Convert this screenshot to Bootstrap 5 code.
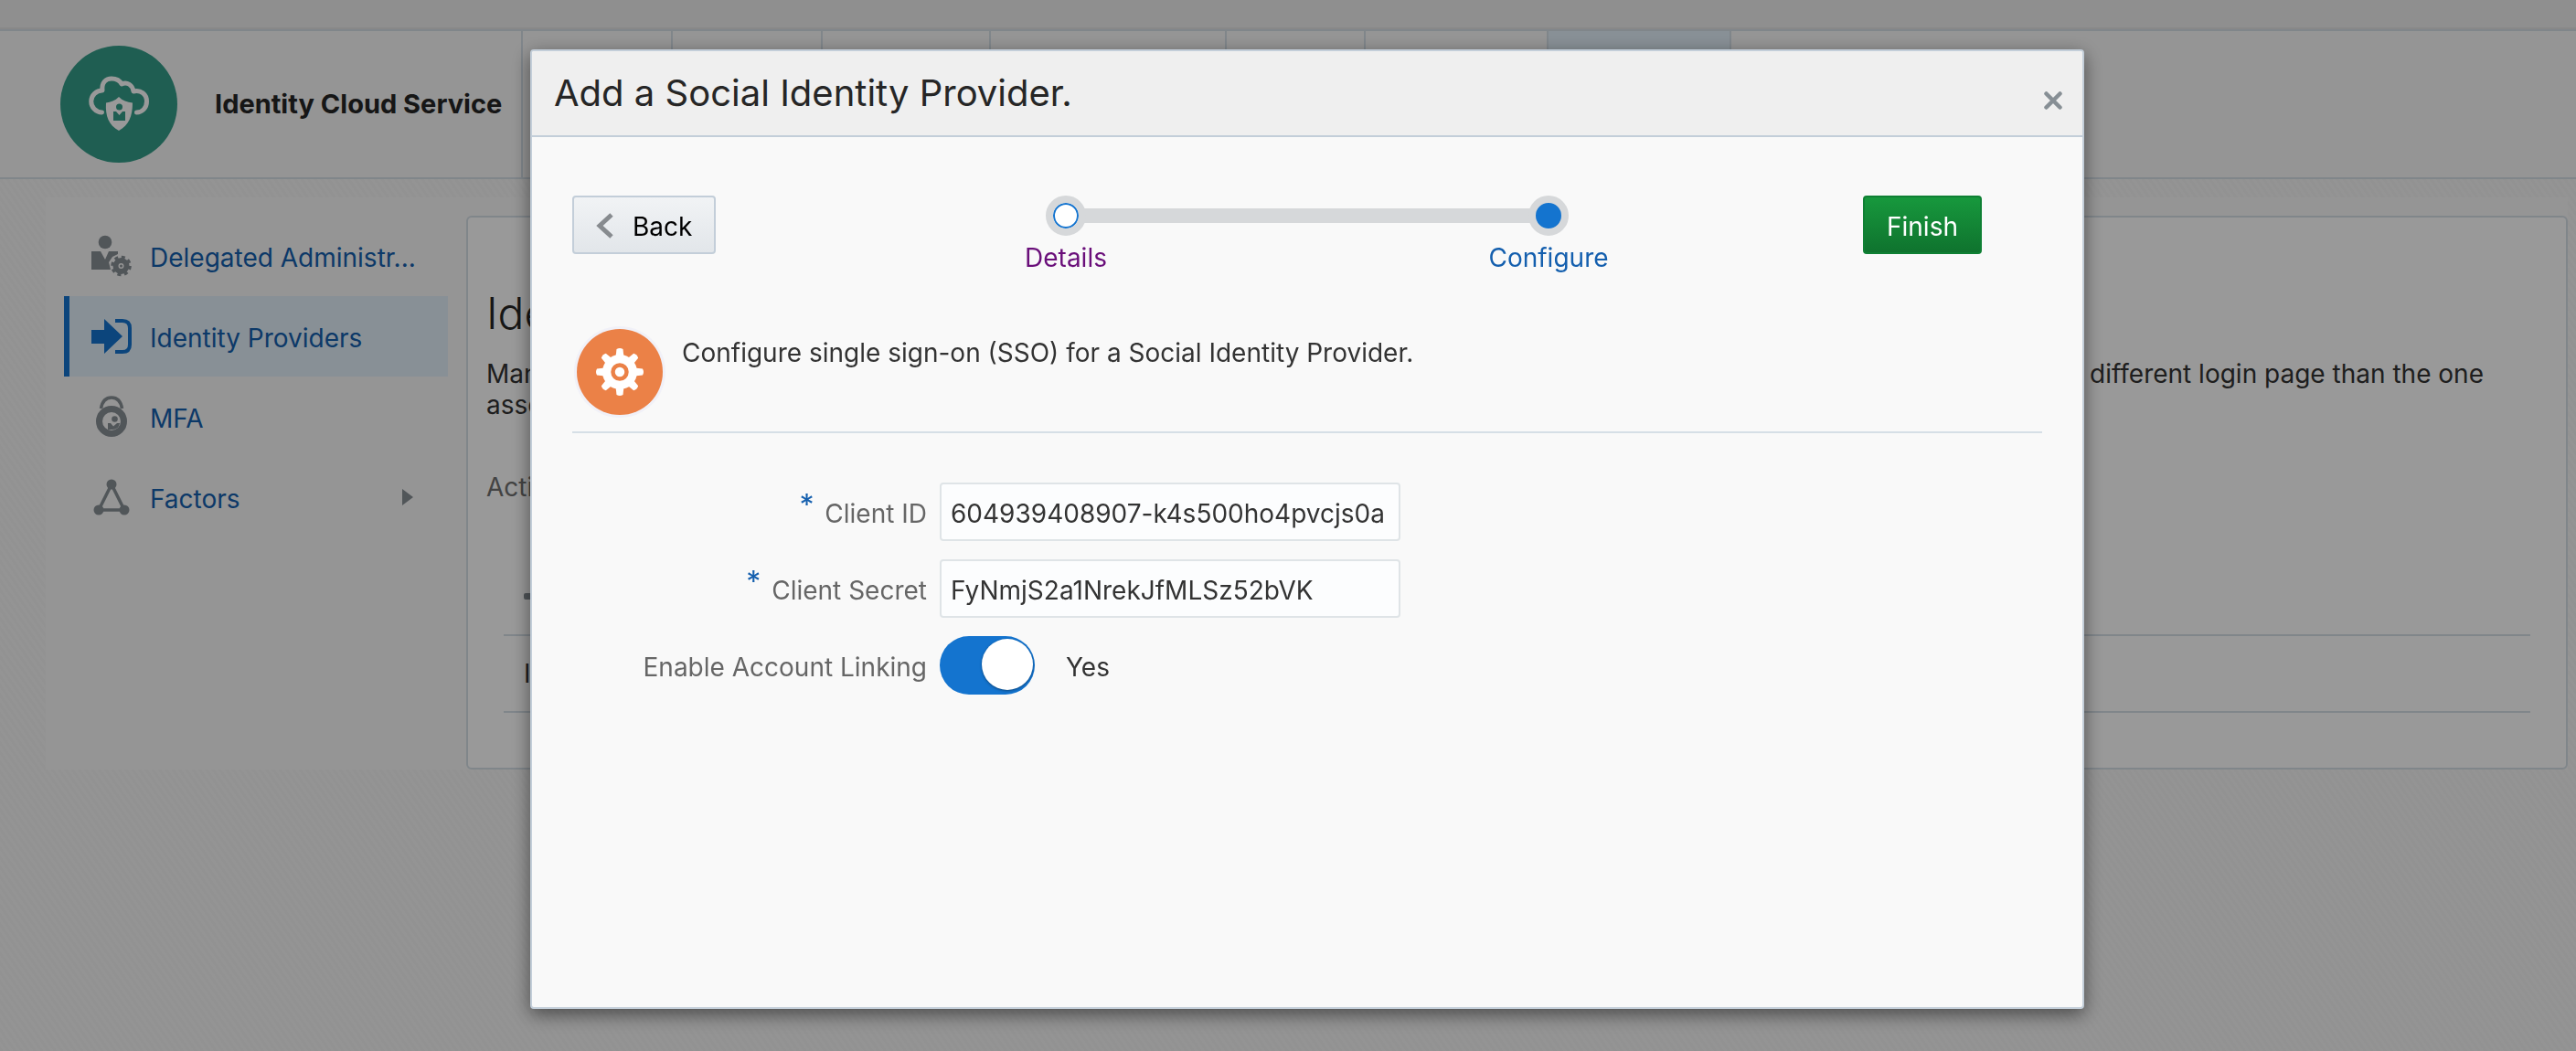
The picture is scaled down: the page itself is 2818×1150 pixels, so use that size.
<!DOCTYPE html>
<html lang="en">
<head>
<meta charset="utf-8">
<meta name="viewport" content="width=device-width, initial-scale=1">
<title>Identity Cloud Service</title>
<link href="https://cdn.jsdelivr.net/npm/bootstrap@5.3.0/dist/css/bootstrap.min.css" rel="stylesheet">
<style>
  :root {
    --line: #d5dfe7;
    --frame: #c3ced9;
    --accent: #1474cf;
    --link: #145fae;
    --icon: #878f95;
  }
  body {
    font-family: Inter, "Liberation Sans", sans-serif;
    font-size: 28px;
    line-height: 34px;
    color: #333;
    min-height: 100vh;
    background: repeating-linear-gradient(55deg, #f4f4f4 0 3px, #f7f7f7 3px 6px);
  }
  .topbar { height: 32px; background: #eee; border-bottom: 2px solid #e3e3e3; }
  .masthead {
    height: 164px;
    border-top: 2px solid var(--line);
    border-bottom: 2px solid var(--line);
    background: #f8f8f8;
  }
  .brand { padding: 0 22px 0 66px; gap: 41px; font-size: 29px; font-weight: 700; color: #262626; width: 570px; }
  .tabs > li { border-left: 2px solid var(--line); width: 164px; }
  .tabs > .tab-md { width: 184px; }
  .tabs > .tab-lg { width: 258px; }
  .tabs > .tab-sm { width: 152px; }
  .tabs > .tab-xl { width: 200px; }
  .tabs > .current { background: #e3f0fa; }
  .workspace { margin: 20px 9px 0 50px; padding: 20px 0 0 20px; gap: 20px; background: #f8f8f8; }
  .sidenav { width: 420px; }
  .sidenav a {
    height: 88px;
    padding: 0 36px 0 24px;
    border-left: 6px solid transparent;
    color: var(--link);
    text-decoration: none;
    gap: 20px;
  }
  .sidenav a > span { padding-top: 4px; }
  .sidenav a.active { background: #e3f0fa; border-color: var(--accent); }
  .sidenav svg { flex: none; color: var(--icon); }
  .sidenav a.active svg { color: var(--accent); }
  .panel { border: 2px solid var(--line); border-radius: 6px; background: #fff; padding: 77px 20px 60px; min-width: 0; }
  .panel h1 { font-size: 48px; line-height: 56px; font-weight: 300; color: #262626; margin-bottom: 21px; }
  .panel p { margin-bottom: 56px; padding-right: 70px; }
  .panel .state { color: #707070; margin-bottom: 60px; }
  .grid-rows { margin: 0 19px; }
  .grid-rows > div { height: 86px; padding-left: 22px; border-bottom: 2px solid var(--line); }
  .grid-rows > div + div { height: 84px; }

  .modal-backdrop { --bs-backdrop-opacity: .4; }
  .modal { padding-left: 42px; }
  .modal-dialog { max-width: 1700px; margin: 54px auto 0; }
  .modal-content {
    min-height: calc(100vh - 100px);
    border: 2px solid var(--frame);
    border-radius: 4px;
    background: #f9f9f9;
    box-shadow: 0 6px 20px rgba(0, 0, 0, .5);
    color: #333;
  }
  .modal-header { height: 94px; padding: 0 22px 0 24px; background: #efefef; border-bottom: 2px solid var(--frame); border-radius: 2px 2px 0 0; }
  .modal-title { font-size: 40px; line-height: 48px; font-weight: 400; color: #262626; }
  .close-btn { border: 0; background: none; padding: 0; color: var(--icon); line-height: 0; margin-top: 16px; }
  .modal-body { padding: 64px 44px; }

  .wizard-bar { display: grid; grid-template-columns: 1fr auto 1fr; align-items: start; }
  .wizard-btn { height: 64px; border-radius: 4px; padding: 4px 24px 0; font-size: 28px; line-height: 34px; justify-self: start; }
  .back-btn { color: #000; border: 2px solid var(--frame); background: linear-gradient(#f1f3f5, #e2e6ea); gap: 20px; }
  .back-btn svg { margin-bottom: 2px; }
  .finish-btn { color: #fff; border: 2px solid #0f8034; background: linear-gradient(#17983d, #0f732e); justify-self: end; margin-right: 66px; }
  .stepper { position: relative; width: 704px; }
  .stepper::before { content: ""; position: absolute; top: 14px; left: 88px; right: 88px; height: 16px; background: #d6d8da; }
  .stepper li { width: 176px; position: relative; }
  .stepper a { text-decoration: none; color: var(--link); line-height: 36px; gap: 6px; }
  .stepper .visited { color: #6a0f7a; }
  .dot { width: 44px; height: 44px; border: 8px solid #d6d8da; border-radius: 50%; background: var(--accent); }
  .visited .dot { background: #fff; box-shadow: inset 0 0 0 2px var(--accent); }

  .intro { margin: 55px 0 54px; padding-bottom: 13px; gap: 16px; border-bottom: 2px solid #d6dfe6; }
  .intro p { line-height: 36px; padding-top: 13px; }
  .field { height: 64px; margin-bottom: 20px; }
  .field label { padding: 4px 14px 0 0; color: #666; text-align: right; }
  .req { color: var(--link); margin-right: 4px; font-size: 32px; line-height: 0; vertical-align: 8px; }
  .field .form-control {
    width: 504px; height: 64px; padding: 4px 8px 0 10px; border: 2px solid #dfe4e7; border-radius: 4px;
    background: #fcfdfe; font-size: 28px; line-height: 34px; color: #333;
  }
  .field .toggle {
    appearance: none; width: 104px; height: 64px; border-radius: 32px; margin: 0; background: var(--accent);
    display: flex; justify-content: flex-end; align-items: center; padding: 0 2px;
  }
  .field .toggle::before { content: ""; width: 56px; height: 56px; margin-bottom: 2px; border-radius: 50%; background: #fff; box-shadow: 0 1px 3px rgba(0, 0, 0, .4); }
  .field output { padding: 4px 0 0 34px; }
</style>
<script src="https://cdn.jsdelivr.net/npm/bootstrap@5.3.0/dist/js/bootstrap.bundle.min.js"></script>
</head>
<body>
<div class="topbar"></div>
<header class="masthead d-flex">
  <div class="brand d-flex align-items-center flex-shrink-0">
    <svg class="flex-shrink-0" width="128" height="128" viewBox="0 0 128 128" aria-hidden="true">
      <circle cx="64" cy="64" r="64" fill="#359d89"/>
      <path d="M45.500 73A12 12 0 0 1 46 49C45 40 50 36 56 36c5 0 9 2 11 6 6-3 12 1 13 8 8-2 14.500 3 14.500 11 0 7-5 12-11 12" fill="none" stroke="#fff" stroke-width="5" stroke-linecap="round" stroke-linejoin="round"/>
      <path d="M64 56c4 4 9 6 15 6.500C79 77 75 87 64 93 53 87 49 77 50 62.500 55 62 60 60 64 56z" fill="#fff"/>
      <circle cx="64.500" cy="67" r="3.500" fill="#359d89"/>
      <path d="M58 72h3l3.500 4 3.500-4h3v10H58z" fill="#359d89"/>
    </svg>
    <span class="text-nowrap">Identity Cloud Service</span>
  </div>
  <ul class="tabs list-unstyled d-flex mb-0">
    <li></li><li></li><li class="tab-md"></li><li class="tab-lg"></li><li class="tab-sm"></li><li class="tab-xl"></li><li class="tab-xl current"></li><li></li>
  </ul>
</header>

<main class="workspace d-flex">
  <nav class="sidenav flex-shrink-0">
    <a href="#" class="d-flex align-items-center">
      <svg width="44" height="46" viewBox="0 0 44 46" fill="currentColor" aria-hidden="true">
        <circle cx="15" cy="8" r="7.300"/>
        <path d="M0 18h10l5 9 4-9h10v3l-6 3-4 6 2 8H0z"/>
        <circle cx="32.500" cy="34" r="6" fill="none" stroke="currentColor" stroke-width="6"/>
        <circle cx="32.500" cy="34" r="9.800" fill="none" stroke="currentColor" stroke-width="3" stroke-dasharray="4 3.700"/>
        <circle cx="32.500" cy="34" r="1.500"/>
      </svg>
      <span class="text-nowrap">Delegated Administr...</span>
    </a>
    <a href="#" class="active d-flex align-items-center" aria-current="page">
      <svg width="44" height="38" viewBox="0 0 44 38" fill="currentColor" aria-hidden="true">
        <path d="M0 12h14V0l20 19-20 19V27H0z"/>
        <path d="M26 2h8q8 0 8 8v18q0 8-8 8h-8" fill="none" stroke="currentColor" stroke-width="4"/>
      </svg>
      <span>Identity Providers</span>
    </a>
    <a href="#" class="d-flex align-items-center">
      <svg width="44" height="46" viewBox="0 0 44 46" fill="currentColor" aria-hidden="true">
        <path d="M10.500 14C12 5 16 2 22 2s10 3 11.500 12" fill="none" stroke="currentColor" stroke-width="3.500"/>
        <circle cx="22" cy="28" r="13.500" fill="none" stroke="currentColor" stroke-width="7"/>
        <circle cx="25.500" cy="25.500" r="3.300"/>
        <path d="M18 30h3l3 3.500 4-3.500h3q-1 7-8 7h-5z"/>
      </svg>
      <span>MFA</span>
    </a>
    <a href="#" class="d-flex align-items-center">
      <svg width="44" height="42" viewBox="0 0 44 42" fill="currentColor" aria-hidden="true">
        <path d="M22 7 8 35h28z" fill="none" stroke="currentColor" stroke-width="3.500"/>
        <circle cx="22" cy="7" r="5.500"/><circle cx="8" cy="35" r="5.500"/><circle cx="36" cy="35" r="5.500"/>
      </svg>
      <span class="flex-grow-1">Factors</span>
      <svg width="14" height="18" viewBox="0 0 14 18" fill="currentColor" aria-hidden="true"><path d="M0 0l12 9-12 9z"/></svg>
    </a>
  </nav>
  <section class="panel flex-grow-1">
    <h1>Identity Providers</h1>
    <p class="d-flex justify-content-between"><span>Manage<br>associated</span><span>different login page than the one</span></p>
    <div class="state">Activated</div>
    <div class="grid-rows">
      <div class="d-flex align-items-center">
        <svg width="20" height="7" viewBox="0 0 20 7" aria-hidden="true"><rect width="20" height="7" rx="2" fill="#878f95"/></svg>
      </div>
      <div class="d-flex align-items-center">Identity</div>
    </div>
  </section>
</main>

<div class="modal-backdrop show"></div>
<div class="modal show d-block" role="dialog" aria-labelledby="dialogTitle">
  <div class="modal-dialog">
    <div class="modal-content">
      <div class="modal-header d-flex justify-content-between">
        <h2 class="modal-title" id="dialogTitle">Add a Social Identity Provider.</h2>
        <button type="button" class="close-btn" aria-label="Close">
          <svg width="20" height="20" viewBox="0 0 20 20" aria-hidden="true"><path d="M2.500 2.500l15 15m0-15l-15 15" stroke="currentColor" stroke-width="4.500" stroke-linecap="round"/></svg>
        </button>
      </div>
      <div class="modal-body">
        <div class="wizard-bar">
          <button type="button" class="btn wizard-btn back-btn d-flex align-items-center">
            <svg width="20" height="28" viewBox="0 0 20 28" fill="none" aria-hidden="true"><path d="M17 2 4 14l13 12" stroke="#878b8f" stroke-width="5"/></svg>
            <span>Back</span>
          </button>
          <ol class="stepper list-unstyled d-flex justify-content-between mb-0">
            <li><a href="#" class="visited d-flex flex-column align-items-center"><span class="dot"></span>Details</a></li>
            <li><a href="#" class="d-flex flex-column align-items-center"><span class="dot"></span>Configure</a></li>
          </ol>
          <button type="button" class="btn wizard-btn finish-btn">Finish</button>
        </div>

        <div class="intro d-flex">
          <svg width="104" height="104" viewBox="0 0 104 104" aria-hidden="true">
            <circle cx="52" cy="52" r="50" fill="#f1f1f8"/>
            <circle cx="52" cy="52" r="47" fill="#eb8147"/>
            <g fill="#fff">
              <circle cx="52" cy="52" r="19"/>
              <path id="tooth" d="M47.500 36l1-9q3.500-2 7 0l1 9z"/>
              <use href="#tooth" transform="rotate(45 52 52)"/><use href="#tooth" transform="rotate(90 52 52)"/>
              <use href="#tooth" transform="rotate(135 52 52)"/><use href="#tooth" transform="rotate(180 52 52)"/>
              <use href="#tooth" transform="rotate(225 52 52)"/><use href="#tooth" transform="rotate(270 52 52)"/>
              <use href="#tooth" transform="rotate(315 52 52)"/>
            </g>
            <circle cx="52" cy="52" r="7.500" fill="#fff" stroke="#eb8147" stroke-width="4.500"/>
          </svg>
          <p class="mb-0">Configure single sign-on (SSO) for a Social Identity Provider.</p>
        </div>

        <form>
          <div class="field row g-0 align-items-center">
            <label class="col-3" for="clientId"><span class="req">*</span> Client ID</label>
            <input class="form-control" id="clientId" type="text" value="604939408907-k4s500ho4pvcjs0a">
          </div>
          <div class="field row g-0 align-items-center">
            <label class="col-3" for="clientSecret"><span class="req">*</span> Client Secret</label>
            <input class="form-control" id="clientSecret" type="text" value="FyNmjS2a1NrekJfMLSz52bVK">
          </div>
          <div class="field row g-0 align-items-center">
            <label class="col-3" for="linking">Enable Account Linking</label>
            <input class="toggle" id="linking" type="checkbox" role="switch" checked>
            <output class="col-auto" for="linking">Yes</output>
          </div>
        </form>
      </div>
    </div>
  </div>
</div>
</body>
</html>
